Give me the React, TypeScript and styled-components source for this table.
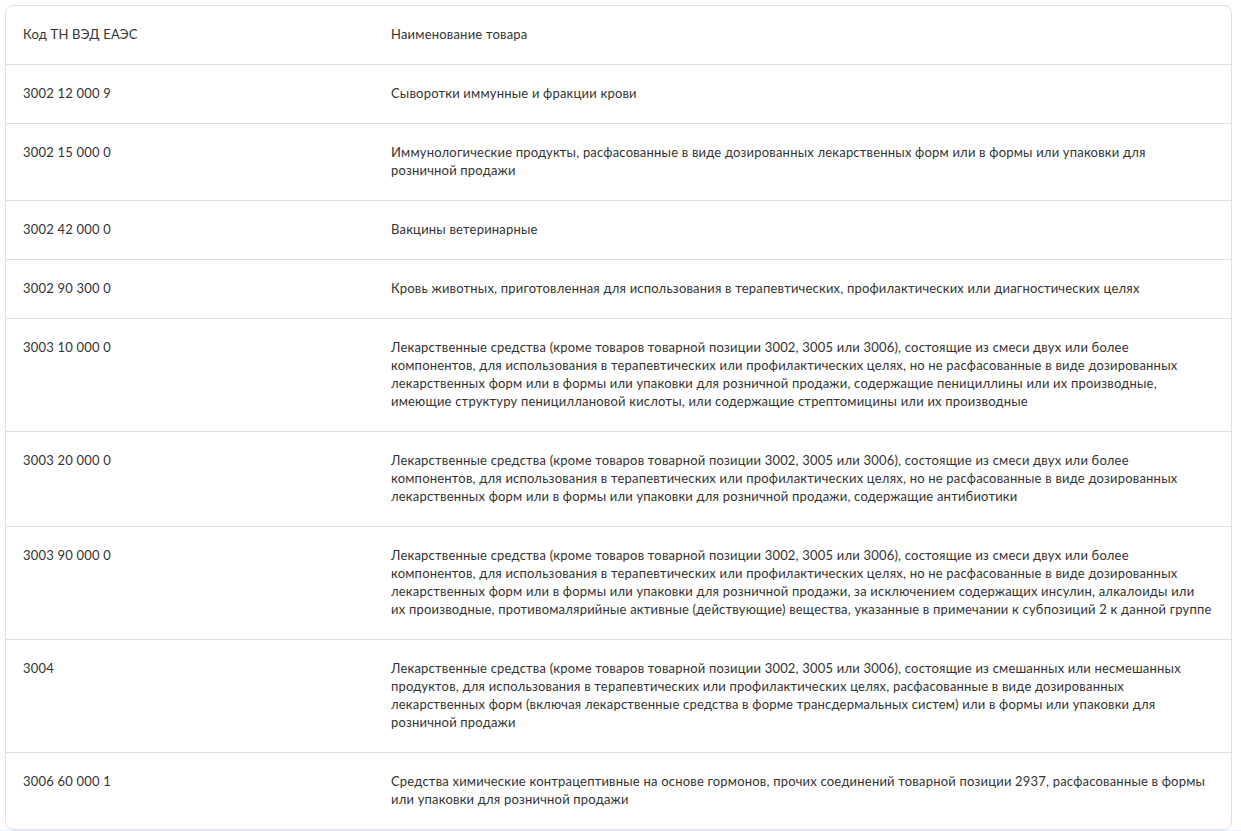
import styled, { createGlobalStyle } from "styled-components";

const GlobalStyle = createGlobalStyle`
  html, body {
    margin: 0;
    padding: 0;
    background: #e8eef6;
  }
  body {
    font-family: Lato, "Open Sans", "Liberation Sans", sans-serif;
  }
`;

const Page = styled.div`
  background: #ffffff;
  padding: 5px 9px 0 5px;
`;

const Card = styled.div`
  border: 1px solid #e0e0e0;
  border-radius: 8px;
  background: #ffffff;
  overflow: hidden;
`;

const Row = styled.div<{ $head?: boolean }>`
  display: grid;
  grid-template-columns: 368px 1fr;
  border-top: ${(p) => (p.$head ? "none" : "1px solid #e0e0e0")};
  padding: 20px 20px 20px 17px;
  font-size: 13px;
  line-height: 18px;
  letter-spacing: 0.2px;
  color: #333333;
`;

const Code = styled.div`
  white-space: nowrap;
  margin-top: -1px;
`;

const Name = styled.div`
  margin-top: -1px;
  margin-bottom: 1px;
`;

const Line = styled.span`
  display: block;
  white-space: nowrap;
`;

// lines are split the same way as on the original page
const rows: [string, string[]][] = [
  ["3002 12 000 9", ["Сыворотки иммунные и фракции крови"]],
  [
    "3002 15 000 0",
    [
      "Иммунологические продукты, расфасованные в виде дозированных лекарственных форм или в формы или упаковки для",
      "розничной продажи",
    ],
  ],
  ["3002 42 000 0", ["Вакцины ветеринарные"]],
  [
    "3002 90 300 0",
    [
      "Кровь животных, приготовленная для использования в терапевтических, профилактических или диагностических целях",
    ],
  ],
  [
    "3003 10 000 0",
    [
      "Лекарственные средства (кроме товаров товарной позиции 3002, 3005 или 3006), состоящие из смеси двух или более",
      "компонентов, для использования в терапевтических или профилактических целях, но не расфасованные в виде дозированных",
      "лекарственных форм или в формы или упаковки для розничной продажи, содержащие пенициллины или их производные,",
      "имеющие структуру пенициллановой кислоты, или содержащие стрептомицины или их производные",
    ],
  ],
  [
    "3003 20 000 0",
    [
      "Лекарственные средства (кроме товаров товарной позиции 3002, 3005 или 3006), состоящие из смеси двух или более",
      "компонентов, для использования в терапевтических или профилактических целях, но не расфасованные в виде дозированных",
      "лекарственных форм или в формы или упаковки для розничной продажи, содержащие антибиотики",
    ],
  ],
  [
    "3003 90 000 0",
    [
      "Лекарственные средства (кроме товаров товарной позиции 3002, 3005 или 3006), состоящие из смеси двух или более",
      "компонентов, для использования в терапевтических или профилактических целях, но не расфасованные в виде дозированных",
      "лекарственных форм или в формы или упаковки для розничной продажи, за исключением содержащих инсулин, алкалоиды или",
      "их производные, противомалярийные активные (действующие) вещества, указанные в примечании к субпозиций 2 к данной группе",
    ],
  ],
  [
    "3004",
    [
      "Лекарственные средства (кроме товаров товарной позиции 3002, 3005 или 3006), состоящие из смешанных или несмешанных",
      "продуктов, для использования в терапевтических или профилактических целях, расфасованные в виде дозированных",
      "лекарственных форм (включая лекарственные средства в форме трансдермальных систем) или в формы или упаковки для",
      "розничной продажи",
    ],
  ],
  [
    "3006 60 000 1",
    [
      "Средства химические контрацептивные на основе гормонов, прочих соединений товарной позиции 2937, расфасованные в формы",
      "или упаковки для розничной продажи",
    ],
  ],
];

export default function App() {
  return (
    <>
      <GlobalStyle />
      <Page>
        <Card>
          <Row $head>
            <Code>Код ТН ВЭД ЕАЭС</Code>
            <Name>Наименование товара</Name>
          </Row>
          {rows.map(([code, lines]) => (
            <Row key={code}>
              <Code>{code}</Code>
              <Name>
                {lines.map((line, i) => (
                  <Line key={i}>{line}</Line>
                ))}
              </Name>
            </Row>
          ))}
        </Card>
      </Page>
    </>
  );
}
